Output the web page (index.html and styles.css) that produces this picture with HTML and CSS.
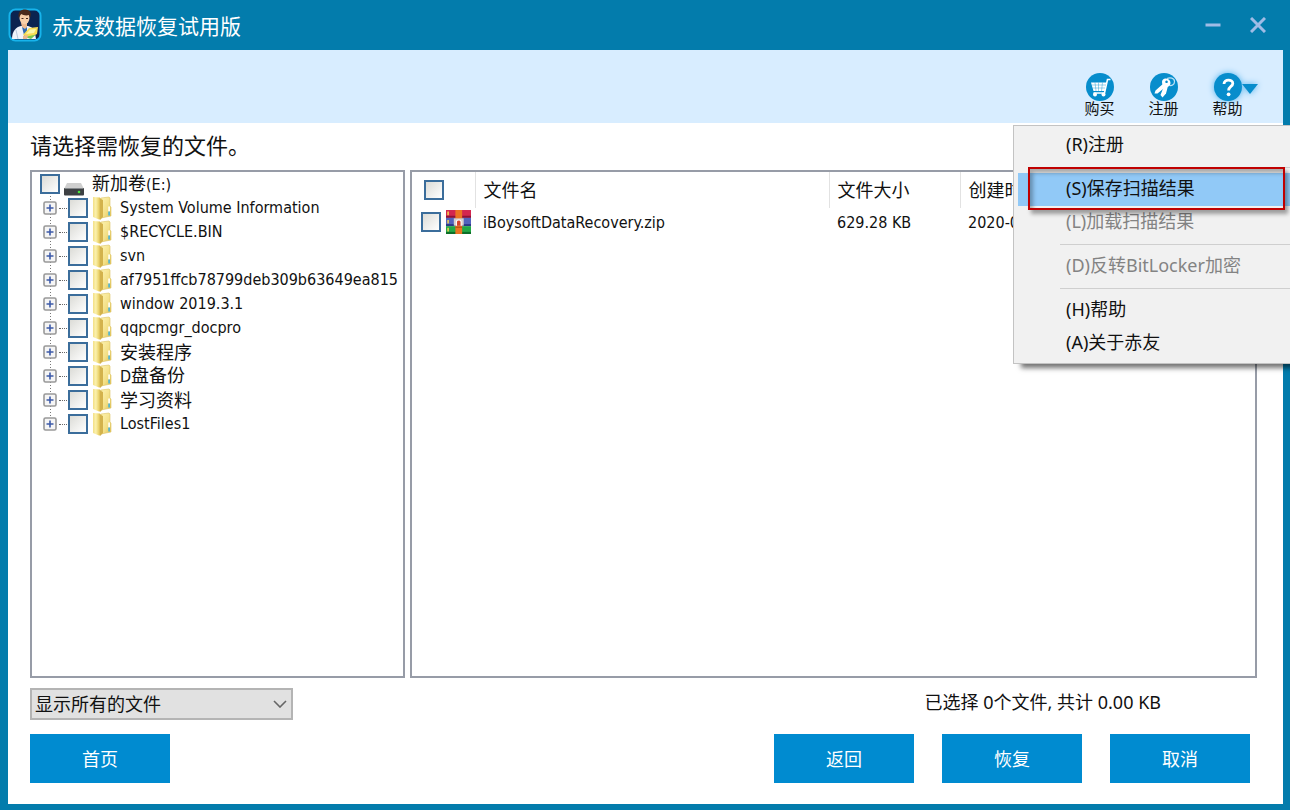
FILE: index.html
```html
<!DOCTYPE html>
<html lang="zh-CN">
<head>
<meta charset="utf-8">
<title>赤友数据恢复试用版</title>
<link rel="stylesheet" href="styles.css">
</head>
<body>
<svg class="sprite" aria-hidden="true">
  <defs>
    <linearGradient id="gold" x1="0" x2="1" y1="0" y2="0">
      <stop offset="0" stop-color="#f3df85"/><stop offset=".35" stop-color="#fbf1ae"/><stop offset=".7" stop-color="#ecd570"/><stop offset="1" stop-color="#cdaa45"/>
    </linearGradient>
    <linearGradient id="gold-front" x1="0" x2="1" y1="0" y2="1">
      <stop offset="0" stop-color="#fdf3b0"/><stop offset=".6" stop-color="#f3df86"/><stop offset="1" stop-color="#dfbf50"/>
    </linearGradient>
    <symbol id="folder" viewBox="0 0 20 24">
      <path d="M9 2 L17 1 L18 2 V10 L19 11 V20 L9 22Z" fill="url(#gold-front)" stroke="#dcc364" stroke-width=".6"/>
      <path d="M1 1 L8 1.500 L9 3 V23.500 H7 L1 21Z" fill="url(#gold)"/>
      <path d="M9 3 L11 4 V21 L8.500 23.500Z" fill="#d3b24c"/>
      <rect x="16.200" y="10.500" width="1.800" height="5" fill="#fffdf0"/>
      <rect x="16.200" y="15.500" width="1.800" height="4" fill="#56b6d0"/>
    </symbol>
    <symbol id="plus" viewBox="0 0 14 14">
      <rect x="1" y="1" width="12" height="12" rx="1.500" fill="#f5f5f5" stroke="#999" stroke-width="1.600"/>
      <path d="M3.500 7H10.500M7 3.500V10.500" stroke="#3c5aa8" stroke-width="1.600"/>
    </symbol>
  </defs>
</svg>

<div class="window">
  <header class="titlebar">
    <svg class="logo" viewBox="0 0 34 34" aria-hidden="true">
      <rect x="1.500" y="1.500" width="31" height="31" rx="6" fill="#0b2450" stroke="#17b4ec" stroke-width="2"/>
      <path d="M4 31 C4 23 8 19 13 18 L20 18 C24 19 26 21 27 25 L28 31Z" fill="#eef3fa"/>
      <path d="M13 15 H19 V19 L17 22 L14 19Z" fill="#edb98f"/>
      <path d="M14 19 L17 21 L19 19 L19 27 L16.500 29Z" fill="#2d6bb4"/>
      <ellipse cx="16.500" cy="10" rx="5" ry="6.200" fill="#f7cfa9"/>
      <path d="M10.800 10 C9.500 4 13 1.500 17 1.500 C22 1.500 24 5 22 10 L21 7 C18 8 15 7 13 6 Z" fill="#4a2a1b"/>
      <path d="M13.500 10.500h2M18 10.500h2" stroke="#4a2a1b" stroke-width="1"/>
      <path d="M8 22 L10 31" stroke="#b9c9dd" stroke-width="1"/>
      <path d="M15 27 L21 20 L30 19 L29 26 L21 30Z" fill="#f7dc54"/>
      <path d="M18 26 L22 21.500 L28 21 L26 25Z" fill="#f9f6a9"/>
      <path d="M17 29 L28 26.500 L23 31Z" fill="#78c850"/>
      <path d="M15 28 L20 27 L19 31 L15 31Z" fill="#eab88f"/>
    </svg>
    <h1 class="title">赤友数据恢复试用版</h1>
    <button class="caption-button" aria-label="最小化">
      <svg viewBox="0 0 16 16"><path d="M0.500 8H15.500" stroke="#a0bce6" stroke-width="3"/></svg>
    </button>
    <button class="caption-button" aria-label="关闭">
      <svg viewBox="0 0 16 16"><path d="M1 1L15 15M15 1L1 15" stroke="#a0bce6" stroke-width="3"/></svg>
    </button>
  </header>

  <div class="content">
    <nav class="toolbar">
      <button class="tool">
        <svg viewBox="0 0 28 28" aria-hidden="true">
          <circle cx="14" cy="14" r="14" fill="#078dcc"/>
          <path d="M5 9.500H20.500L19 18H7.500Z" fill="#fff"/>
          <path d="M24.500 6.500H21.500L18.500 20H7.500" fill="none" stroke="#fff" stroke-width="1.600"/>
          <path d="M6 12H20M6.500 15H19M9 9.500L10 18M12.500 9.500V18M16.500 9.500L15.500 18" stroke="#078dcc" stroke-width=".4"/>
          <circle cx="9" cy="21.500" r="2" fill="#fff"/><circle cx="17.500" cy="21.500" r="2" fill="#fff"/>
        </svg>
        <span>购买</span>
      </button>
      <button class="tool">
        <svg viewBox="0 0 28 28" aria-hidden="true">
          <circle cx="14" cy="14" r="14" fill="#078dcc"/>
          <path d="M17 5.500 C20 4 24.500 5 24.500 8.500 C24.500 11.500 22 13 19.500 12.500" fill="none" stroke="#bfe2f5" stroke-width="1.200"/>
          <path fill-rule="evenodd" d="M12 9 C12 6.500 14 5.300 16 5.600 C19 6 20.500 8 20.500 10 C20.500 13 18 14.500 15.500 14 L7.500 20.500 L4.500 20.500 L5.500 17.500 L12.300 11.500Z M16.500 7.500 A1.300 1.300 0 1 0 16.600 7.500Z" fill="#fff"/>
          <path d="M18 13 L16 20.500 L12.500 24.500 L10.500 22 L14 13Z" fill="#fff"/>
        </svg>
        <span>注册</span>
      </button>
      <div class="help">
        <button class="tool tool-active" aria-haspopup="menu" aria-expanded="true">
          <svg viewBox="0 0 28 28" aria-hidden="true">
            <circle cx="14" cy="14" r="14" fill="#078dcc"/>
            <path d="M10 11 C10 5.800 18.800 6 18.800 10.500 C18.800 13.500 14.600 13.500 14.600 17.500" fill="none" stroke="#fff" stroke-width="2.800"/>
            <circle cx="14.600" cy="21.300" r="1.900" fill="#fff"/>
          </svg>
          <span>帮助</span>
          <svg class="arrow" viewBox="0 0 18 10" aria-hidden="true"><path d="M1 0H17L9 10Z" fill="#078dcc"/></svg>
        </button>
        <div class="menu" role="menu">
          <button class="item" role="menuitem">(R)注册</button>
          <hr class="rule">
          <button class="item item-selected" role="menuitem">(S)保存扫描结果</button>
          <button class="item" role="menuitem" disabled>(L)加载扫描结果</button>
          <hr class="rule">
          <button class="item" role="menuitem" disabled>(D)反转BitLocker加密</button>
          <hr class="rule">
          <button class="item" role="menuitem">(H)帮助</button>
          <button class="item" role="menuitem">(A)关于赤友</button>
        </div>
      </div>
    </nav>

    <main class="main">
      <h2 class="prompt">请选择需恢复的文件。</h2>
      <div class="panels">
        <section class="panel tree" aria-label="文件夹">
          <label class="root"><input class="check" type="checkbox">
            <svg class="disk" viewBox="0 0 20 14" aria-hidden="true">
              <path d="M3 1H17L20 7H0Z" fill="#cfcfcf"/><rect y="6" width="20" height="7.500" rx="1" fill="#3d4043"/>
              <path d="M1 6.500H19" stroke="#85898c"/><circle cx="15" cy="10" r="1.300" fill="#48e63c"/>
            </svg><span>新加卷<span class="latin">(E:)</span></span></label>
          <ul class="nodes">
            <li class="node"><svg class="plus"><use href="#plus"/></svg><i class="dots"></i><label><input class="check" type="checkbox"><svg class="folder"><use href="#folder"/></svg><span class="latin">System Volume Information</span></label></li>
            <li class="node"><svg class="plus"><use href="#plus"/></svg><i class="dots"></i><label><input class="check" type="checkbox"><svg class="folder"><use href="#folder"/></svg><span class="latin">$RECYCLE.BIN</span></label></li>
            <li class="node"><svg class="plus"><use href="#plus"/></svg><i class="dots"></i><label><input class="check" type="checkbox"><svg class="folder"><use href="#folder"/></svg><span class="latin">svn</span></label></li>
            <li class="node"><svg class="plus"><use href="#plus"/></svg><i class="dots"></i><label><input class="check" type="checkbox"><svg class="folder"><use href="#folder"/></svg><span class="latin">af7951ffcb78799deb309b63649ea815</span></label></li>
            <li class="node"><svg class="plus"><use href="#plus"/></svg><i class="dots"></i><label><input class="check" type="checkbox"><svg class="folder"><use href="#folder"/></svg><span class="latin">window 2019.3.1</span></label></li>
            <li class="node"><svg class="plus"><use href="#plus"/></svg><i class="dots"></i><label><input class="check" type="checkbox"><svg class="folder"><use href="#folder"/></svg><span class="latin">qqpcmgr_docpro</span></label></li>
            <li class="node"><svg class="plus"><use href="#plus"/></svg><i class="dots"></i><label><input class="check" type="checkbox"><svg class="folder"><use href="#folder"/></svg><span>安装程序</span></label></li>
            <li class="node"><svg class="plus"><use href="#plus"/></svg><i class="dots"></i><label><input class="check" type="checkbox"><svg class="folder"><use href="#folder"/></svg><span><span class="latin">D</span>盘备份</span></label></li>
            <li class="node"><svg class="plus"><use href="#plus"/></svg><i class="dots"></i><label><input class="check" type="checkbox"><svg class="folder"><use href="#folder"/></svg><span>学习资料</span></label></li>
            <li class="node"><svg class="plus"><use href="#plus"/></svg><i class="dots"></i><label><input class="check" type="checkbox"><svg class="folder"><use href="#folder"/></svg><span class="latin">LostFiles1</span></label></li>
          </ul>
        </section>

        <section class="panel" aria-label="文件">
          <table class="files">
            <colgroup><col class="col-check"><col class="col-name"><col class="col-size"><col></colgroup>
            <thead>
              <tr><th class="pick-all"><input class="check" type="checkbox" aria-label="全选"></th><th>文件名</th><th>文件大小</th><th>创建时间</th></tr>
            </thead>
            <tbody>
              <tr>
                <td class="pick"><div class="pick-row"><input class="check" id="file" type="checkbox">
                  <svg class="archive" viewBox="0 0 24 23" aria-hidden="true">
                    <rect width="24" height="7.500" fill="#d3264f"/><path d="M0 5.500H24V7.500H0Z" fill="#8e1236"/>
                    <rect y="7.500" width="24" height="8" fill="#5363bd"/><path d="M0 13.500H24V15.500H0Z" fill="#2c3987"/>
                    <rect y="15.500" width="24" height="7.500" fill="#22a845"/><path d="M0 21H24V23H0Z" fill="#0d6f28"/>
                    <path d="M2 1.500V5M2 9.500V13M2 17V20.500" stroke="#f4d052" stroke-width="1.500"/>
                    <rect x="9" width="6.500" height="23" fill="#ec7423"/>
                    <rect x="7.500" y="8" width="9.500" height="7" fill="#d8d0cd"/>
                    <path d="M10 15V11.500C10 9 14.500 9 14.500 11.500V15" fill="#d8442c" stroke="#fff" stroke-width="1"/>
                    <path d="M9 16.500H15.500" stroke="#b44a12"/>
                  </svg></div></td>
                <td><label class="latin" for="file">iBoysoftDataRecovery.zip</label></td>
                <td><span class="latin">629.28 KB</span></td>
                <td><span class="latin">2020-0</span></td>
              </tr>
            </tbody>
          </table>
        </section>
      </div>

      <div class="summary">
        <div class="filter">
          <select class="filter-select" aria-label="文件类型"><option>显示所有的文件</option></select>
          <svg class="chevron" viewBox="0 0 14 8" aria-hidden="true"><path d="M1 1L7 7L13 1" fill="none" stroke="#666" stroke-width="1.600"/></svg>
        </div>
        <p class="status">已选择 0个文件, 共计 0.00 KB</p>
      </div>

      <footer class="actions">
        <button class="action">首页</button>
        <div class="action-group">
          <button class="action">返回</button>
          <button class="action">恢复</button>
          <button class="action">取消</button>
        </div>
      </footer>
    </main>
  </div>
</div>
</body>
</html>
```
FILE: styles.css
```css
*, *::before, *::after { box-sizing: border-box; }

body {
  margin: 0;
  font-family: "Noto Sans", "Noto Sans CJK SC", sans-serif;
  font-size: 18px;
  line-height: 24px;
  color: #111;
}

button { font: inherit; border: 0; padding: 0; background: none; color: inherit; }
svg { display: block; flex: none; }
.sprite { position: absolute; width: 0; height: 0; }
.latin {
  font-family: "DejaVu Sans Condensed", "Noto Sans", sans-serif;
  font-size: 16px;
}

.window {
  display: flex;
  flex-direction: column;
  min-height: 100vh;
  padding: 0 7px 6px 8px;
  background: #037cac;
  overflow: hidden;
}

/* title bar */
.titlebar { display: flex; align-items: center; height: 50px; padding-right: 17px; }
.logo { width: 34px; height: 34px; }
.title {
  flex: 1;
  margin: 0;
  padding: 2px 0 0 10px;
  font-size: 21px;
  font-weight: 400;
  color: #fff;
}
.caption-button { width: 16px; margin-left: 29px; }

.content { flex: 1; display: flex; flex-direction: column; background: #fff; }

/* toolbar */
.toolbar {
  display: flex;
  justify-content: flex-end;
  gap: 35px;
  height: 73px;
  padding: 23px 41px 0 0;
  background: #d8edff;
}
.tool {
  position: relative;
  display: flex;
  flex-direction: column;
  align-items: center;
  align-self: flex-start;
  width: 29px;
  font-size: 15px;
  line-height: 15px;
  white-space: nowrap;
}
.tool svg { width: 28px; height: 28px; }
.tool-active svg { filter: drop-shadow(0 0 3px #4fb2ec); }
.tool .arrow { position: absolute; left: 28px; top: 11px; width: 18px; height: 10px; }
.help { position: relative; }

/* drop-down menu */
.menu {
  position: absolute;
  z-index: 1;
  top: 52px;
  left: -200px;
  width: 300px;
  padding: 3px 4px;
  border: 1px solid #c3c3c3;
  background: #f1f1f1;
  box-shadow: 6px 6px 5px -2px rgba(0, 0, 0, .55);
}
.item {
  position: relative;
  display: block;
  width: 100%;
  height: 33px;
  padding: 0 0 3px 48px;
  text-align: left;
}
.item:disabled { color: #838383; }
.item-selected { background: #91c9f7; }
.item-selected::after {
  content: "";
  position: absolute;
  z-index: 1;
  top: -6px;
  left: 10px;
  width: 257px;
  height: 43px;
  border: 2px solid #c00000;
  box-shadow: 3px 4px 4px rgba(0, 0, 0, .35), inset 3px 4px 4px rgba(0, 0, 0, .3);
}
.rule { height: 1px; margin: 5px 0 5px 42px; border: 0; background: #cfcfcf; }

/* body */
.main { flex: 1; display: flex; flex-direction: column; padding: 8px 26px 21px 22px; }
.prompt { margin: 0 0 11px; font-size: 22px; line-height: 28px; font-weight: 400; }
.panels { flex: 1; display: grid; grid-template-columns: 375fr 847fr; gap: 5px; }
.panel { min-width: 0; border: 2px solid #979ca7; overflow: hidden; }

.check {
  appearance: none;
  flex: none;
  width: 20px;
  height: 20px;
  margin: 0;
  border: 2px solid #3b6d9b;
  background: linear-gradient(135deg, #dcdcd7, #fff) padding-box;
}

.tree { line-height: 24px; white-space: nowrap; }
.root { display: flex; align-items: center; height: 24px; padding-left: 8px; }
.disk { width: 20px; height: 14px; margin: 9px 8px 0 4px; }
.nodes { margin: 0; padding: 0 0 0 11px; list-style: none; }
.node {
  display: flex;
  align-items: center;
  height: 24px;
  background: repeating-linear-gradient(#777 0 1px, transparent 1px 3px) 7px 0 / 1px 12px no-repeat;
}
.node:not(:last-child) { background-size: 1px 24px; }
.node label { display: flex; align-items: center; flex: none; }
.plus { width: 14px; height: 14px; }
.dots { flex: none; width: 8px; margin: 0 1px 0 2px; border-top: 1px dotted #666; }
.folder { width: 20px; height: 24px; margin: 0 8px 0 4px; }

/* file list */
.files { width: 100%; table-layout: fixed; border-collapse: collapse; text-align: left; }
.files th { height: 36px; padding: 0 0 0 8px; font-weight: 400; border-right: 1px solid #e2e2e2; }
.files td { height: 28px; padding: 0 0 0 8px; }
.files .pick-all { padding-left: 12px; }
.files .pick { padding-left: 9px; }
.files .check { display: block; }
.pick-row { display: flex; align-items: center; gap: 5px; }
.archive { width: 25px; height: 24px; }
.col-check { width: 63px; }
.col-name { width: 354px; }
.col-size { width: 131px; }

/* footer */
.summary { display: flex; justify-content: space-between; margin-top: 10px; }
.filter { position: relative; width: 263px; }
.filter-select {
  appearance: none;
  width: 100%;
  height: 32px;
  padding: 0 3px;
  border: 2px solid #b4b4b4;
  border-radius: 0;
  background: #e1e1e1;
  font: inherit;
  color: #111;
}
.chevron {
  position: absolute;
  top: 12px;
  right: 6px;
  width: 14px;
  height: 8px;
  pointer-events: none;
}
.status { margin: 2px 96px 0 0; }
.actions { display: flex; justify-content: space-between; margin-top: 14px; padding-right: 7px; }
.action-group { display: flex; gap: 28px; }
.action { width: 140px; height: 49px; background: #008bd0; color: #fff; }
```
